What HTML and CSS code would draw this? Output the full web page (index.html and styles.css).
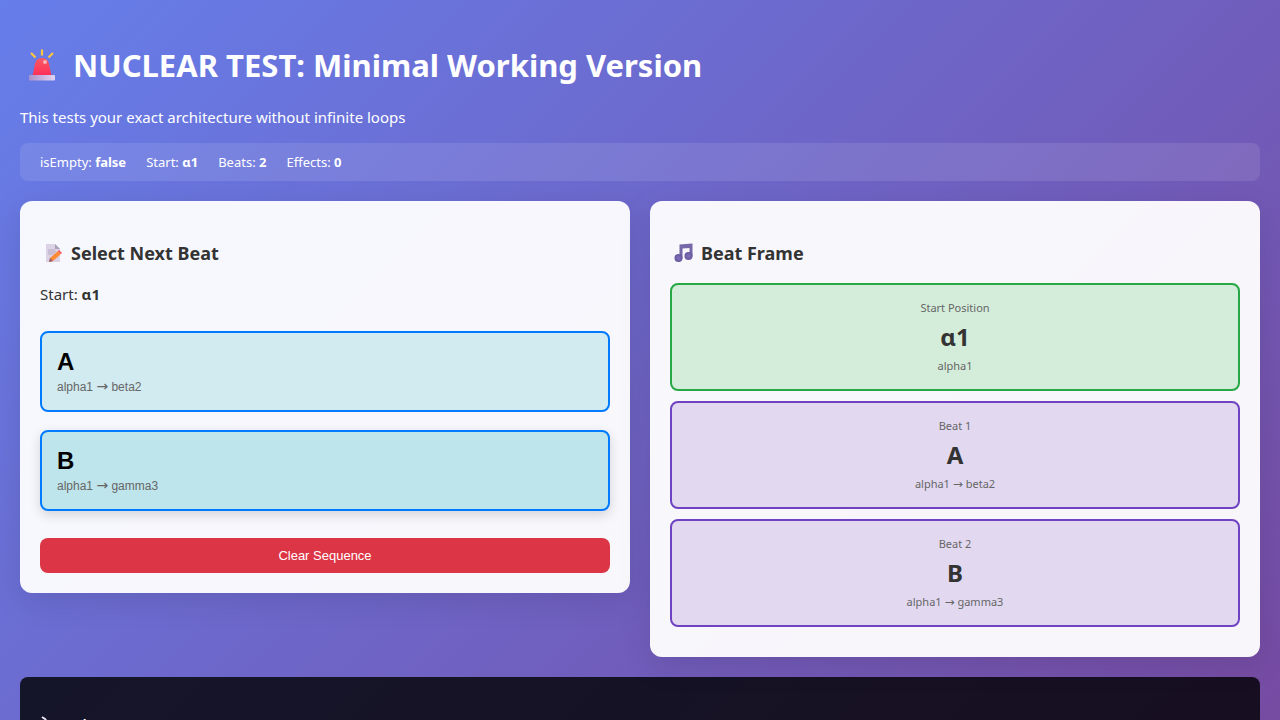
FILE: index.html
```html
<!DOCTYPE html>
<html lang="en">
<head>
<meta charset="utf-8">
<title>NUCLEAR TEST: Minimal Working Version</title>
<link rel="stylesheet" href="styles.css">
</head>
<body>
<main class="page">
  <h1 class="title">
    <svg class="title-icon" viewBox="0 0 32 32" aria-hidden="true">
      <defs>
        <linearGradient id="lamp" x1="0" y1="0" x2="0" y2="1"><stop offset="0" stop-color="#fa5a63"/><stop offset="1" stop-color="#ff2d58"/></linearGradient>
        <linearGradient id="base" x1="0" y1="0" x2="1" y2="0"><stop offset="0" stop-color="#aa91c9"/><stop offset="1" stop-color="#e0d4f1"/></linearGradient>
      </defs>
      <path d="M5 4l4.500 4.500M16 0.500v6M27 4l-4.500 4.500" fill="none" stroke="#ffc640" stroke-width="2.200"/>
      <path d="M6.500 27l2.500-12q1-6 7-6t7 6l2.500 12z" fill="url(#lamp)"/>
      <circle cx="19" cy="13" r="2" fill="#ffb4b8"/>
      <rect x="3" y="26" width="26" height="5.500" rx="1" fill="url(#base)"/>
    </svg>
    <span>NUCLEAR TEST: Minimal Working Version</span>
  </h1>
  <p class="subtitle">This tests your exact architecture without infinite loops</p>
  <div class="status">
    <span>isEmpty: <strong>false</strong></span>
    <span>Start: <strong>α1</strong></span>
    <span>Beats: <strong>2</strong></span>
    <span>Effects: <strong>0</strong></span>
  </div>
  <div class="columns">
    <section class="panel">
      <h3 class="heading">
        <svg class="heading-icon" viewBox="0 0 20 20" aria-hidden="true">
          <path d="M2 1h9l5 5v13H2z" fill="#dcd2e5"/>
          <path d="M11 1l5 5h-5z" fill="#aaa0b3"/>
          <path d="M4 7h7M4 9h8M4 11h6" stroke="#b5a9c1" stroke-width="1"/>
          <path d="M5 19l1-4 8-7 3 3-8 7z" fill="#ff8b38"/>
          <path d="M14 8l1-1 3 3-1 1z" fill="#f8485c"/>
          <path d="M5 19l1-4 3 3z" fill="#8c6278"/>
        </svg>
        <span>Select Next Beat</span>
      </h3>
      <p class="start">Start: <strong>α1</strong></p>
      <div class="options">
        <button class="option" type="button"><span class="option-letter">A</span><span class="option-path">alpha1 <span class="arrow">→</span> beta2</span></button>
        <button class="option option-active" type="button"><span class="option-letter">B</span><span class="option-path">alpha1 <span class="arrow">→</span> gamma3</span></button>
      </div>
      <button class="clear" type="button">Clear Sequence</button>
    </section>
    <section class="panel">
      <h3 class="heading">
        <svg class="heading-icon" viewBox="0 0 20 20" aria-hidden="true">
          <defs><radialGradient id="note"><stop offset="0" stop-color="#8272bd"/><stop offset="1" stop-color="#65559a"/></radialGradient></defs>
          <path d="M5.500 1.500L18.500 0.500v13h-3V5L8.500 5.500v10h-3z" fill="#7668a8"/>
          <circle cx="4.500" cy="15" r="4" fill="url(#note)"/><circle cx="14.500" cy="13" r="4" fill="url(#note)"/>
        </svg>
        <span>Beat Frame</span>
      </h3>
      <div class="beats">
        <div class="beat beat-start"><span class="beat-label">Start Position</span><strong class="beat-letter">α1</strong><span class="beat-label">alpha1</span></div>
        <div class="beat"><span class="beat-label">Beat 1</span><strong class="beat-letter">A</strong><span class="beat-label">alpha1 <span class="arrow">→</span> beta2</span></div>
        <div class="beat"><span class="beat-label">Beat 2</span><strong class="beat-letter">B</strong><span class="beat-label">alpha1 <span class="arrow">→</span> gamma3</span></div>
      </div>
    </section>
  </div>
  <section class="log">
    <h3 class="log-title">
      <svg class="log-icon" viewBox="0 0 18 18" aria-hidden="true"><path d="M2 1l3 2 7 10" fill="none" stroke="#e6e0ee" stroke-width="2"/></svg>
      <span>Debug</span>
    </h3>
  </section>
</main>
</body>
</html>
```

FILE: styles.css
```css
* { box-sizing: border-box; }
html { background: linear-gradient(135deg, #667eea 0%, #764ba2 100%); }
body { margin: 0; height: 100vh; overflow: hidden; font-family: "Segoe UI", "Noto Sans", sans-serif; color: #333; }
.page { padding: 43px 20px 20px; }
.title { display: flex; align-items: center; gap: 15px; margin: 0; padding-left: 6px; color: #fff; font-size: 31px; line-height: 44px; }
.title-icon { width: 32px; height: 32px; }
.subtitle { margin: 19px 0 15px; color: #fff; font-size: 15px; line-height: 22px; }
.status { display: flex; gap: 20px; padding: 10px 20px; border-radius: 8px; background: rgba(255, 255, 255, 0.1); color: #fff; font-size: 13px; line-height: 18px; }
.columns { display: grid; grid-template-columns: 1fr 1fr; gap: 20px; align-items: start; margin: 20px 0; }
.panel { padding: 39px 20px 20px; border-radius: 12px; background: rgba(255, 255, 255, 0.95); box-shadow: 0 8px 32px rgba(0, 0, 0, 0.1); }
.heading { display: flex; align-items: center; gap: 7px; margin: 0 0 17px; padding-left: 4px; font-size: 18px; line-height: 26px; }
.heading-icon { width: 20px; height: 20px; }
.start { margin: 0 0 25px; font-size: 15px; line-height: 23px; }
.options { display: grid; gap: 18px; margin-bottom: 27px; }
.option { display: flex; flex-direction: column; align-items: flex-start; padding: 15px; height: 81px; border: 2px solid #007bff; border-radius: 8px; background: #d1ebf0; color: #000; text-align: left; font-family: "Liberation Sans", Arial, sans-serif; }
.option-active { background: #bee5eb; box-shadow: 0 4px 12px rgba(0, 0, 0, 0.15); }
.option-letter { font-size: 24px; font-weight: 700; line-height: 28px; }
.option-path { color: #666; font-size: 12px; line-height: 22px; }
.option-path .arrow { font-size: 14px; }
.arrow { font-family: "DejaVu Sans", sans-serif; line-height: 1; }
.clear { display: block; width: 100%; padding: 10px; border: 0; border-radius: 8px; background: #dc3545; color: #fff; font: 13px/15px "Liberation Sans", Arial, sans-serif; }
.beats { display: grid; gap: 10px; margin-bottom: 10px; }
.beat { display: flex; flex-direction: column; align-items: center; padding: 15px; border: 2px solid #6f42c1; border-radius: 8px; background: #e2d9f1; }
.beat-start { border-color: #28a745; background: #d4edda; }
.beat-label { color: #666; font-size: 11px; line-height: 16px; }
.beat-label .arrow { font-size: 12px; }
.beat-letter { margin: 5px 0; font-size: 24px; line-height: 32px; }
.log { padding: 38px 20px 20px; border-radius: 8px; background: rgba(0, 0, 0, 0.8); color: #fff; }
.log-title { display: flex; align-items: center; gap: 9px; margin: 0; font: bold 13px/20px "DejaVu Sans Mono", monospace; }
.log-icon { width: 18px; height: 18px; }
```
